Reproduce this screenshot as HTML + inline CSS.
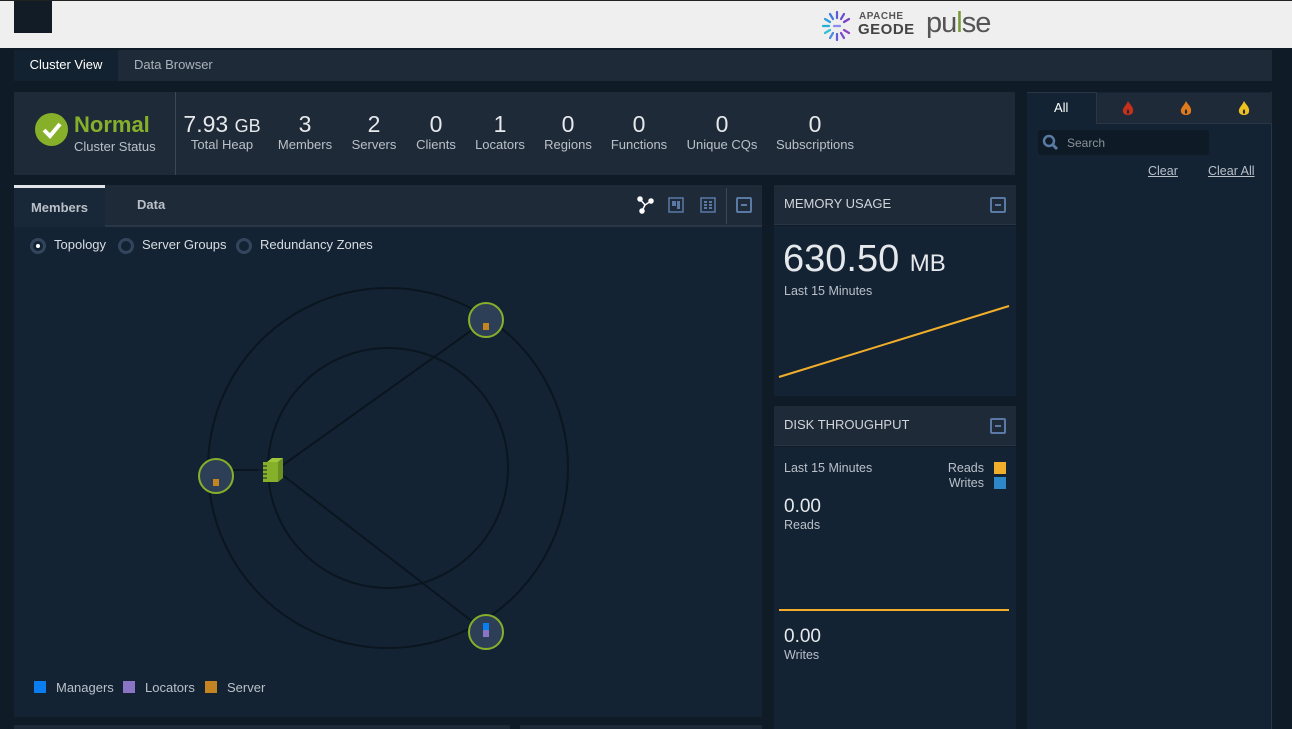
<!DOCTYPE html>
<html><head><meta charset="utf-8"><style>
*{margin:0;padding:0;box-sizing:border-box}
body{width:1292px;height:729px;overflow:hidden;background:#0f1b26;font-family:"Liberation Sans",sans-serif;position:relative;color:#d8dde3}
.a{position:absolute}
.hdr{background:#1f2a39}
.bd{background:#132333}
.c{text-align:center;transform:translateX(-50%)}
.num{font-size:23px;color:#e6e9ec;top:111px}
.lbl{font-size:13px;color:#b9c0c8;top:137px}
.min{width:16px;height:16px;border:2px solid #5a7aa5;border-radius:2px}
.min:after{content:"";position:absolute;left:3px;top:5px;width:6px;height:2px;background:#5a7aa5}
</style></head><body>
<div class="a" style="left:0;top:0;width:1292px;height:48px;background:#efefef;border-top:1px solid #222"></div>
<div class="a" style="left:14px;top:1px;width:38px;height:32px;background:#111c26"></div>
<!-- logo -->
<svg class="a" style="left:820px;top:9px" width="34" height="34" viewBox="0 0 34 34">
<g stroke-width="2.2" stroke-linecap="round">
<line x1="17" y1="3" x2="17" y2="9" stroke="#5b5bd6"/><line x1="24" y1="5" x2="21" y2="10" stroke="#6b4fd0"/><line x1="29" y1="10" x2="24" y2="13" stroke="#7a3fc8"/>
<line x1="10" y1="5" x2="13" y2="10" stroke="#3a7ae0"/><line x1="5" y1="10" x2="10" y2="13" stroke="#2b9be0"/><line x1="3" y1="17" x2="9" y2="17" stroke="#20b0d8"/>
<line x1="5" y1="24" x2="10" y2="21" stroke="#30c0d0"/><line x1="10" y1="29" x2="13" y2="24" stroke="#4a8ae0"/><line x1="17" y1="31" x2="17" y2="25" stroke="#5a60d8"/>
<line x1="24" y1="29" x2="21" y2="24" stroke="#7a4ad0"/><line x1="29" y1="24" x2="24" y2="21" stroke="#8a40c8"/><line x1="14" y1="17" x2="20" y2="17" stroke="#8a8af0"/>
</g></svg>
<div class="a" style="left:859px;top:11px;font-size:10px;font-weight:bold;color:#555;letter-spacing:0.5px">APACHE</div>
<div class="a" style="left:858px;top:21px;font-size:15px;font-weight:bold;color:#444;letter-spacing:0.5px">GEODE</div>
<div class="a" style="left:926px;top:7px;font-size:29px;color:#555;font-weight:300;letter-spacing:-1px">pu<span style="color:#7a9a3a">l</span>se</div>

<!-- nav tabs -->
<div class="a hdr" style="left:14px;top:50px;width:1258px;height:31px"></div>
<div class="a" style="left:14px;top:50px;width:104px;height:31px;background:#132230;color:#fff;font-size:13px;line-height:29px;text-align:center">Cluster View</div>
<div class="a" style="left:134px;top:50px;color:#aab2bb;font-size:13px;line-height:29px">Data Browser</div>

<!-- status bar -->
<div class="a hdr" style="left:14px;top:92px;width:1001px;height:83px"></div>
<div class="a" style="left:175px;top:92px;width:1px;height:83px;background:#3a4858"></div>
<div class="a" style="left:35px;top:113px;width:33px;height:33px;border-radius:50%;background:#86b02a"></div>
<svg class="a" style="left:35px;top:113px" width="33" height="33"><path d="M9 17 L15 23 L25 11" stroke="#fff" stroke-width="4" fill="none"/></svg>
<div class="a" style="left:74px;top:112px;font-size:22px;font-weight:bold;color:#86b02a">Normal</div>
<div class="a" style="left:74px;top:139px;font-size:13px;color:#b9c0c8">Cluster Status</div>
<div class="a c num" style="left:222px">7.93 <span style="font-size:18px">GB</span></div><div class="a c lbl" style="left:222px">Total Heap</div>
<div class="a c num" style="left:305px">3</div><div class="a c lbl" style="left:305px">Members</div>
<div class="a c num" style="left:374px">2</div><div class="a c lbl" style="left:374px">Servers</div>
<div class="a c num" style="left:436px">0</div><div class="a c lbl" style="left:436px">Clients</div>
<div class="a c num" style="left:500px">1</div><div class="a c lbl" style="left:500px">Locators</div>
<div class="a c num" style="left:568px">0</div><div class="a c lbl" style="left:568px">Regions</div>
<div class="a c num" style="left:639px">0</div><div class="a c lbl" style="left:639px">Functions</div>
<div class="a c num" style="left:722px">0</div><div class="a c lbl" style="left:722px">Unique CQs</div>
<div class="a c num" style="left:815px">0</div><div class="a c lbl" style="left:815px">Subscriptions</div>

<!-- members panel -->
<div class="a hdr" style="left:14px;top:185px;width:748px;height:42px;border-bottom:2px solid #2a3646"></div>
<div class="a bd" style="left:14px;top:227px;width:748px;height:490px"></div>
<div class="a" style="left:14px;top:185px;width:91px;height:42px;background:#192838;border-top:3px solid #e0e4e8;color:#b9c0c8;font-size:13px;font-weight:bold;text-align:center;line-height:40px">Members</div>
<div class="a" style="left:137px;top:197px;color:#b9c0c8;font-size:13px;font-weight:bold">Data</div>
<svg class="a" style="left:636px;top:196px" width="18" height="18"><g stroke="#fff" stroke-width="1.5" fill="#fff"><line x1="4" y1="3" x2="9" y2="9"/><line x1="15" y1="5" x2="9" y2="9"/><line x1="9" y1="9" x2="6" y2="15"/><circle cx="4" cy="3" r="2"/><circle cx="15" cy="5" r="2"/><circle cx="6" cy="15" r="2"/></g></svg>
<svg class="a" style="left:668px;top:197px" width="16" height="16"><rect x="1" y="1" width="14" height="14" fill="none" stroke="#5a7aa5" stroke-width="1.5"/><rect x="4" y="4" width="4" height="5" fill="#5a7aa5"/><rect x="9" y="4" width="3" height="8" fill="#5a7aa5"/></svg>
<svg class="a" style="left:700px;top:197px" width="16" height="16"><rect x="1" y="1" width="14" height="14" fill="none" stroke="#5a7aa5" stroke-width="1.5"/><g fill="#5a7aa5"><rect x="4" y="4" width="3" height="2"/><rect x="9" y="4" width="3" height="2"/><rect x="4" y="7" width="3" height="2"/><rect x="9" y="7" width="3" height="2"/><rect x="4" y="10" width="3" height="2"/><rect x="9" y="10" width="3" height="2"/></g></svg>
<div class="a" style="left:726px;top:188px;width:1px;height:36px;background:#3a4858"></div>
<div class="a min" style="left:736px;top:197px"></div>

<div class="a" style="left:30px;top:238px;width:16px;height:16px;border-radius:50%;border:3px solid #33455c"></div><div class="a" style="left:36px;top:244px;width:4px;height:4px;border-radius:50%;background:#fff"></div>
<div class="a" style="left:54px;top:237px;font-size:13px">Topology</div>
<div class="a" style="left:118px;top:238px;width:16px;height:16px;border-radius:50%;border:3px solid #33455c"></div>
<div class="a" style="left:142px;top:237px;font-size:13px">Server Groups</div>
<div class="a" style="left:236px;top:238px;width:16px;height:16px;border-radius:50%;border:3px solid #33455c"></div>
<div class="a" style="left:260px;top:237px;font-size:13px">Redundancy Zones</div>

<svg class="a" style="left:14px;top:227px" width="748" height="490">
<g fill="none" stroke="#0b1520" stroke-width="2">
<ellipse cx="374" cy="241" rx="180" ry="180"/>
<circle cx="374" cy="241" r="120"/>
<line x1="472" y1="93" x2="262" y2="243"/><line x1="472" y1="405" x2="262" y2="243"/><line x1="202" y1="243" x2="250" y2="243"/>
</g>
<g stroke="#86b02a" stroke-width="2" fill="#2d3f57">
<circle cx="472" cy="93" r="17"/><circle cx="202" cy="249" r="17"/><circle cx="472" cy="405" r="17"/></g>
<rect x="469" y="96" width="6" height="7" fill="#c48422"/>
<rect x="199" y="252" width="6" height="7" fill="#c48422"/>
<rect x="469" y="396" width="6" height="7" fill="#0a7df0"/><rect x="469" y="403" width="6" height="7" fill="#8a74c4"/>
<path d="M249 235 L264 235 L264 255 L249 255 Z" fill="#86b02a"/><path d="M264 235 L269 231 L269 251 L264 255 Z" fill="#6a9020"/><path d="M253 235 L258 231 L269 231 L264 235 Z" fill="#a0c83a"/>
<g stroke="#132333" stroke-width="1"><line x1="244" y1="239" x2="253" y2="239"/><line x1="244" y1="243" x2="253" y2="243"/><line x1="244" y1="247" x2="253" y2="247"/><line x1="244" y1="251" x2="253" y2="251"/></g>
</svg>
<div class="a" style="left:34px;top:681px;width:12px;height:12px;background:#0a7df0"></div><div class="a" style="left:56px;top:680px;font-size:13px;color:#b9c0c8">Managers</div>
<div class="a" style="left:123px;top:681px;width:12px;height:12px;background:#8a74c4"></div><div class="a" style="left:145px;top:680px;font-size:13px;color:#b9c0c8">Locators</div>
<div class="a" style="left:205px;top:681px;width:12px;height:12px;background:#c48422"></div><div class="a" style="left:227px;top:680px;font-size:13px;color:#b9c0c8">Server</div>
<div class="a" style="left:14px;top:725px;width:496px;height:4px;background:#1f2a39"></div>
<div class="a" style="left:520px;top:725px;width:242px;height:4px;background:#1f2a39"></div>

<!-- memory -->
<div class="a hdr" style="left:774px;top:185px;width:242px;height:40px;border-bottom:1px solid #2a3646"></div>
<div class="a bd" style="left:774px;top:226px;width:242px;height:170px"></div>
<div class="a" style="left:784px;top:196px;font-size:13px;color:#d0d5da">MEMORY USAGE</div>
<div class="a min" style="left:990px;top:197px"></div>
<div class="a" style="left:783px;top:238px;font-size:38px;color:#e6e9ec">630.50 <span style="font-size:24px">MB</span></div>
<div class="a" style="left:784px;top:284px;font-size:12.5px;color:#b9c0c8">Last 15 Minutes</div>
<svg class="a" style="left:774px;top:296px" width="242" height="90"><line x1="5" y1="81" x2="235" y2="10" stroke="#f2ae2a" stroke-width="2"/></svg>

<!-- disk -->
<div class="a hdr" style="left:774px;top:406px;width:242px;height:40px;border-bottom:1px solid #2a3646"></div>
<div class="a bd" style="left:774px;top:447px;width:242px;height:282px"></div>
<div class="a" style="left:784px;top:417px;font-size:13px;color:#d0d5da">DISK THROUGHPUT</div>
<div class="a min" style="left:990px;top:418px"></div>
<div class="a" style="left:784px;top:461px;font-size:12.5px;color:#b9c0c8">Last 15 Minutes</div>
<div class="a" style="left:944px;top:461px;font-size:12.5px;color:#b9c0c8;width:40px;text-align:right">Reads</div>
<div class="a" style="left:944px;top:476px;font-size:12.5px;color:#b9c0c8;width:40px;text-align:right">Writes</div>
<div class="a" style="left:994px;top:462px;width:12px;height:12px;background:#f2ae2a"></div>
<div class="a" style="left:994px;top:477px;width:12px;height:12px;background:#2e88c8"></div>
<div class="a" style="left:784px;top:496px;font-size:19px;color:#e6e9ec">0.00</div>
<div class="a" style="left:784px;top:518px;font-size:12.5px;color:#b9c0c8">Reads</div>
<div class="a" style="left:779px;top:609px;width:230px;height:2px;background:#f2ae2a"></div>
<div class="a" style="left:784px;top:626px;font-size:19px;color:#e6e9ec">0.00</div>
<div class="a" style="left:784px;top:648px;font-size:12.5px;color:#b9c0c8">Writes</div>

<!-- right panel -->
<div class="a bd" style="left:1027px;top:92px;width:245px;height:637px;border-right:1px solid #2a3646"></div>
<div class="a hdr" style="left:1097px;top:93px;width:175px;height:31px;border-bottom:1px solid #2a3646"></div>
<div class="a" style="left:1027px;top:92px;width:70px;height:32px;border-top:1px solid #2a3646;border-right:1px solid #2a3646"></div>
<div class="a" style="left:1054px;top:100px;font-size:13px;color:#fff">All</div>
<svg class="a" style="left:1121px;top:100px" width="14" height="17"><path d="M7 1 C9 5 13 7 12 12 C11 16 3 16 2 12 C1 8 5 6 7 1 Z M7 9 C5 11 6 14 7 14 C8 14 9 11 7 9Z" fill="#c8301a" fill-rule="evenodd"/></svg>
<svg class="a" style="left:1179px;top:100px" width="14" height="17"><path d="M7 1 C9 5 13 7 12 12 C11 16 3 16 2 12 C1 8 5 6 7 1 Z M7 9 C5 11 6 14 7 14 C8 14 9 11 7 9Z" fill="#e07a1a" fill-rule="evenodd"/></svg>
<svg class="a" style="left:1237px;top:100px" width="14" height="17"><path d="M7 1 C9 5 13 7 12 12 C11 16 3 16 2 12 C1 8 5 6 7 1 Z M7 9 C5 11 6 14 7 14 C8 14 9 11 7 9Z" fill="#f0c020" fill-rule="evenodd"/></svg>
<div class="a" style="left:1038px;top:130px;width:171px;height:25px;background:#0e1a25;border-radius:3px"></div>
<svg class="a" style="left:1042px;top:134px" width="18" height="18"><circle cx="7" cy="7" r="5" fill="none" stroke="#5a7aa5" stroke-width="2.5"/><line x1="11" y1="11" x2="15" y2="15" stroke="#5a7aa5" stroke-width="3"/></svg>
<div class="a" style="left:1067px;top:136px;font-size:12px;color:#8a929b">Search</div>
<div class="a" style="left:1148px;top:164px;font-size:12.5px;color:#b9c0c8;text-decoration:underline">Clear</div>
<div class="a" style="left:1208px;top:164px;font-size:12.5px;color:#b9c0c8;text-decoration:underline">Clear All</div>
</body></html>
